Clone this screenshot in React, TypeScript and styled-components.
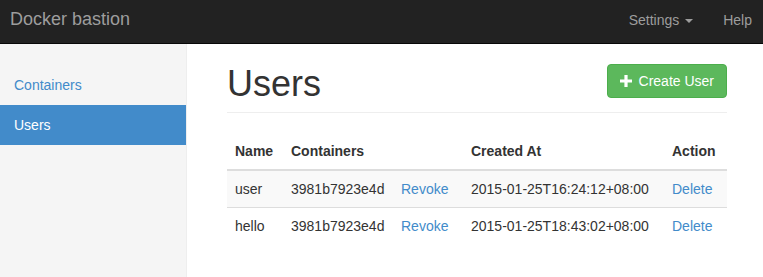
import styled, { createGlobalStyle } from "styled-components";

interface UserRow {
  name: string;
  container: string;
  createdAt: string;
}

const users: UserRow[] = [
  { name: "user", container: "3981b7923e4d", createdAt: "2015-01-25T16:24:12+08:00" },
  { name: "hello", container: "3981b7923e4d", createdAt: "2015-01-25T18:43:02+08:00" },
];

const columnWidths = [56, 110, 70, 201, 63];

const GlobalStyle = createGlobalStyle`
  * {
    box-sizing: border-box;
  }
  body {
    margin: 0;
    font-family: "Liberation Sans", Arial, Helvetica, sans-serif;
    font-size: 14px;
    line-height: 20px;
    color: #333;
    background: #fff;
  }
`;

const PlusIcon = () => (
  <svg width="12" height="12" viewBox="0 0 12 12" aria-hidden="true">
    <path d="M4.4 0h3.2v4.4H12v3.2H7.6V12H4.4V7.6H0V4.4h4.4z" fill="#fff" />
  </svg>
);

export default function App() {
  return (
    <>
      <GlobalStyle />
      <Navbar>
        <Brand>Docker bastion</Brand>
        <NavRight>
          <NavLink>
            Settings <Caret />
          </NavLink>
          <NavLink>Help</NavLink>
        </NavRight>
      </Navbar>
      <Body>
        <Sidebar>
          <SideItem>Containers</SideItem>
          <SideItem $active>Users</SideItem>
        </Sidebar>
        <Main>
          <PageHeader>
            <Title>Users</Title>
            <CreateBtn type="button">
              <PlusIcon />
              Create User
            </CreateBtn>
          </PageHeader>
          <Table>
            <colgroup>
              {columnWidths.map((w, i) => (
                <col key={i} style={{ width: w }} />
              ))}
            </colgroup>
            <thead>
              <tr>
                <Th>Name</Th>
                <Th colSpan={2}>Containers</Th>
                <Th>Created At</Th>
                <Th>Action</Th>
              </tr>
            </thead>
            <tbody>
              {users.map((u, i) => (
                <Tr key={u.name} $striped={i % 2 === 0}>
                  <Td>{u.name}</Td>
                  <Td>{u.container}</Td>
                  <Td>
                    <Link>Revoke</Link>
                  </Td>
                  <Td>{u.createdAt}</Td>
                  <Td>
                    <Link>Delete</Link>
                  </Td>
                </Tr>
              ))}
            </tbody>
          </Table>
        </Main>
      </Body>
    </>
  );
}

const Navbar = styled.div`
  height: 44px;
  background-color: #222;
  border-bottom: 1px solid #080808;
  display: flex;
  align-items: flex-start;
  justify-content: space-between;
`;

const Brand = styled.a`
  padding: 9px 0 0 10px;
  font-size: 18px;
  line-height: 20px;
  color: #9d9d9d;
`;

const NavRight = styled.div`
  display: flex;
  padding-right: 11px;
`;

const NavLink = styled.a`
  display: block;
  padding-top: 10px;
  line-height: 20px;
  color: #9d9d9d;
  white-space: nowrap;

  & + & {
    margin-left: 30px;
  }
`;

const Caret = styled.span`
  display: inline-block;
  width: 0;
  height: 0;
  margin-left: 2px;
  vertical-align: middle;
  border-top: 4px solid #9d9d9d;
  border-left: 4px solid transparent;
  border-right: 4px solid transparent;
`;

const Body = styled.div`
  display: flex;
  min-height: calc(100vh - 44px);
`;

const Sidebar = styled.div`
  width: 187px;
  flex-shrink: 0;
  padding-top: 21px;
  background-color: #f5f5f5;
  border-right: 1px solid #eee;
  display: flex;
  flex-direction: column;
`;

const SideItem = styled.a<{ $active?: boolean }>`
  display: block;
  padding: 10px 14px;
  line-height: 20px;
  color: ${(p) => (p.$active ? "#fff" : "#428bca")};
  background-color: ${(p) => (p.$active ? "#428bca" : "transparent")};
`;

const Main = styled.div`
  flex: 1;
  padding: 20px 36px 0 40px;
`;

const PageHeader = styled.div`
  display: flex;
  align-items: flex-start;
  justify-content: space-between;
  padding-bottom: 9px;
  border-bottom: 1px solid #eee;
  margin-bottom: 20px;
`;

const Title = styled.h1`
  margin: 0;
  font-size: 36px;
  font-weight: 500;
  line-height: 39px;
  color: #333;
`;

const CreateBtn = styled.button`
  display: flex;
  align-items: center;
  gap: 7px;
  height: 34px;
  padding: 0 12px;
  border: 1px solid #4cae4c;
  border-radius: 4px;
  background-color: #5cb85c;
  color: #fff;
  font-family: inherit;
  font-size: 14px;
  line-height: 20px;
  cursor: pointer;
`;

const Table = styled.table`
  width: 100%;
  table-layout: fixed;
  border-collapse: collapse;
  border-spacing: 0;
  margin-bottom: 20px;
`;

const Th = styled.th`
  padding: 8px;
  text-align: left;
  font-weight: 700;
  line-height: 20px;
  vertical-align: bottom;
  border-bottom: 2px solid #ddd;
  white-space: nowrap;
`;

const Tr = styled.tr<{ $striped: boolean }>`
  background-color: ${(p) => (p.$striped ? "#f9f9f9" : "transparent")};
`;

const Td = styled.td`
  padding: 8px;
  line-height: 20px;
  border-top: 1px solid #ddd;
  white-space: nowrap;
`;

const Link = styled.a`
  color: #428bca;
  cursor: pointer;
`;
